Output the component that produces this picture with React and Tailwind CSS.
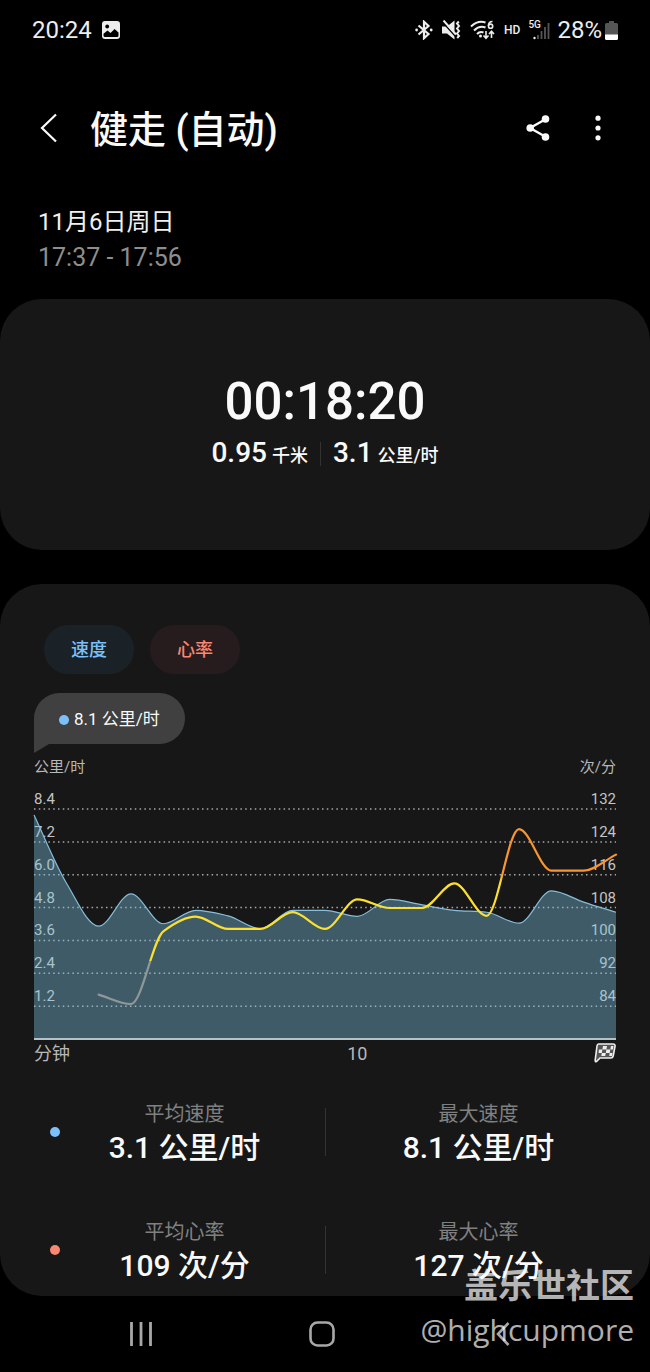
import React from 'react';

const speedData = [
  8.18, 5.7, 4.12, 5.3, 4.21, 4.7, 4.5, 4.03, 4.7, 4.7, 4.48, 5.1, 4.9, 4.7, 4.63, 4.23, 5.41, 5.0, 4.63,
];

// heart rate starts at the third sample
const heartData = [
  86.8, 84.5, 102.2, 105.8, 102.8, 102.8, 106.9, 102.8, 110, 107.9, 107.9, 113.9, 106, 127.1, 117, 117, 120.9,
];

const gridRows = [
  { speed: "8.4", heart: "132" },
  { speed: "7.2", heart: "124" },
  { speed: "6.0", heart: "116" },
  { speed: "4.8", heart: "108" },
  { speed: "3.6", heart: "100" },
  { speed: "2.4", heart: "92" },
  { speed: "1.2", heart: "84" },
];

const WIDTH = 582;
const BASE = 260;
const ROW = 32.85;
const STEP = WIDTH / (speedData.length - 1);

const speedPoints = speedData.map((v, i) => [i * STEP, BASE - (v / 1.2) * ROW]);
const heartPoints = heartData.map((v, i) => [(i + 2) * STEP, BASE - ((v - 76) / 8) * ROW]);

// Monotone cubic interpolation, so the line never overshoots a sample
const smoothPath = (points) => {
  const n = points.length;
  const slopes = [];
  for (let i = 0; i < n - 1; i++) {
    slopes.push((points[i + 1][1] - points[i][1]) / STEP);
  }
  const tangents = points.map((_, i) => {
    if (i === 0) return slopes[0];
    if (i === n - 1) return slopes[n - 2];
    const a = slopes[i - 1];
    const b = slopes[i];
    if (a * b <= 0) return 0;
    return (2 * a * b) / (a + b);
  });
  let d = `M${points[0][0]},${points[0][1]}`;
  for (let i = 0; i < n - 1; i++) {
    const [x0, y0] = points[i];
    const [x1, y1] = points[i + 1];
    const h = STEP / 3;
    d += `C${x0 + h},${y0 + tangents[i] * h} ${x1 - h},${y1 - tangents[i + 1] * h} ${x1},${y1}`;
  }
  return d;
};

const StatusBar = () => (
  <div className="h-15 flex items-center justify-between pl-8 pr-8 text-[#ededed]">
    <div className="flex items-center gap-[10px]">
      <span className="text-2xl">20:24</span>
      <svg width="18" height="18" viewBox="0 0 18 18">
        <rect width="18" height="18" rx="3" fill="#ededed" />
        <circle cx="5.2" cy="5.5" r="1.9" fill="#000" />
        <path d="M1.500 12.800L5.500 9.500l3 2.500L12.600 8 16.500 11.500v3q0 1.500-1.500 1.500H3q-1.500 0-1.500-1.500z" fill="#000" />
      </svg>
    </div>
    <div className="flex items-center">
      <svg className="mr-[9px]" width="18" height="20" viewBox="0 0 18 20" fill="none" stroke="#ededed" strokeWidth="2.200">
        <path d="M3.500 5.500L13.500 14 9 18.200V1.800L13.500 6 3.500 14.500" />
        <circle cx="1.600" cy="10" r="1.400" fill="#ededed" stroke="none" />
        <circle cx="16.200" cy="10" r="1.400" fill="#ededed" stroke="none" />
      </svg>
      <svg className="mr-[9px]" width="19" height="20" viewBox="0 0 19 20">
        <path d="M0 6.500h5L12.500 0.500v19l-7.500-6H0z" fill="#ededed" />
        <path d="M0 1.500L14 17" stroke="#000" strokeWidth="1.500" />
        <path d="M1.500 0.500L14 14.500" stroke="#ededed" strokeWidth="2" />
        <path d="M16.800 1.500l-1.800 2 2 2.500-2 2.500 2 2.500-2 2.500 2 2.500-1.800 2" stroke="#ededed" strokeWidth="2" fill="none" />
      </svg>
      <svg className="mr-[9px]" width="25" height="20" viewBox="0 0 25 20" fill="none" stroke="#ededed" strokeWidth="2">
        <path d="M1 6.500Q8 0 15.500 2.500M4 10.500Q9.500 5 15.500 7.500M7 14Q10 11 13.500 12.500" />
        <circle cx="10.500" cy="16" r="1.500" fill="#ededed" stroke="none" />
        <path d="M22.500 1.500Q18.500 1.500 18.400 6" strokeWidth="1.600" />
        <circle cx="20.600" cy="6.200" r="2.100" strokeWidth="1.600" />
        <path d="M16 11v7M13.500 15.500L16 18.200l2.500-2.700M21.500 18v-6.500M19 14l2.500-2.700L24 14" strokeWidth="1.600" />
      </svg>
      <span className="mr-2 text-xs font-medium">HD</span>
      <div className="relative mr-[7px] w-[22px] h-5">
        <span className="absolute left-0 top-0 text-[10px] leading-[10px] font-medium">5G</span>
        <svg width="22" height="20" viewBox="0 0 22 20">
          <circle cx="6.500" cy="18" r="1.200" fill="#ededed" />
          <path d="M10 19v-4M13.500 19v-8M17 19V7M20.500 19V3" stroke="#555" strokeWidth="1.800" />
        </svg>
      </div>
      <span className="mr-[3px] text-2xl">28%</span>
      <svg width="13" height="19" viewBox="0 0 13 19">
        <path d="M4 0h5v2h2.500q1.500 0 1.500 1.500V14H0V3.500Q0 2 1.500 2H4z" fill="#555" />
        <path d="M0 13.500h13V17.500q0 1.500-1.500 1.500h-10Q0 19 0 17.500z" fill="#fff" />
      </svg>
    </div>
  </div>
);

const Header = () => (
  <header className="flex items-center pt-[38px] pl-9 pr-[38px]">
    <button aria-label="返回" className="w-[54px] h-15 flex items-center">
      <svg width="24" height="30" viewBox="0 0 24 30" fill="none" stroke="#fafafa" strokeWidth="2.200">
        <path d="M20 1.500L6 15l14 13.500" />
      </svg>
    </button>
    <h1 className="flex-1 pt-1 text-[38px] leading-14 font-medium text-[#fafafa]">健走 (自动)</h1>
    <button aria-label="分享" className="w-10 h-15 flex items-center justify-center">
      <svg width="24" height="26" viewBox="0 0 24 26" fill="#fafafa">
        <path d="M20 4L4 13l16 9" fill="none" stroke="#fafafa" strokeWidth="2.400" />
        <circle cx="19.500" cy="4" r="3.800" />
        <circle cx="4.200" cy="13" r="3.800" />
        <circle cx="19.500" cy="22" r="3.800" />
      </svg>
    </button>
    <button aria-label="更多选项" className="ml-[26px] w-7 h-15 flex items-center justify-center">
      <svg width="6" height="26" viewBox="0 0 6 26" fill="#fafafa">
        <circle cx="3" cy="3.200" r="2.600" />
        <circle cx="3" cy="13" r="2.600" />
        <circle cx="3" cy="22.800" r="2.600" />
      </svg>
    </button>
  </header>
);

const SummaryCard = () => (
  <section className="mt-[23px] pt-[72px] pb-20 rounded-[42px] bg-[#171717] text-[#fafafa] font-medium text-center">
    <p className="text-[51px] leading-[62px]">00:18:20</p>
    <div className="mt-1 flex items-center justify-center leading-8">
      <p className="text-[28px]">
        0.95 <span className="-ml-[2px] text-lg">千米</span>
      </p>
      <span className="mx-3 w-px h-6 bg-[#333]" />
      <p className="text-[28px]">
        3.1 <span className="-ml-[2px] text-lg">公里/时</span>
      </p>
    </div>
  </section>
);

const Tooltip = () => (
  <div className="relative mt-[19px] w-fit h-[51px] flex items-center gap-[5px] pt-[2px] px-[25px] rounded-[26px] rounded-bl-none bg-[#404040] text-[17px] text-[#fafafa]">
    <span className="w-[10px] h-[10px] rounded-full bg-[#7cc0fb]" />
    8.1 公里/时
    <svg className="absolute left-0 top-full" width="16" height="9" viewBox="0 0 16 9">
      <path d="M0 0H15L0 9z" fill="#404040" />
    </svg>
  </div>
);

const Chart = () => {
  const speedLine = smoothPath(speedPoints);
  return (
    <div className="mt-[11px]">
      <div className="flex justify-between text-[15px] leading-6 text-[#b8b8b8]">
        <span>公里/时</span>
        <span>次/分</span>
      </div>
      <svg className="w-full h-auto block overflow-visible" viewBox="0 0 582 286">
        <defs>
          <linearGradient id="zones" gradientUnits="userSpaceOnUse" x1="0" y1="0" x2="0" y2="260">
            <stop offset="0.36" stopColor="#f7962f" />
            <stop offset="0.4" stopColor="#fbe030" />
            <stop offset="0.7" stopColor="#fbe030" />
            <stop offset="0.7" stopColor="#8f9799" />
          </linearGradient>
        </defs>
        {gridRows.map((row, i) => {
          const y = BASE - ROW * (7 - i);
          return (
            <g key={row.speed} fill="#c4c4c4" fontSize="15">
              <line x1="0" x2={WIDTH} y1={y} y2={y} stroke="#a8a8a8" strokeWidth="1.500" strokeDasharray="1.500 3.300" />
              <text x="0" y={y - 5}>{row.speed}</text>
              <text x={WIDTH} y={y - 5} textAnchor="end">{row.heart}</text>
            </g>
          );
        })}
        <path d={`${speedLine}V${BASE}H0Z`} fill="#7bc3e1" fillOpacity="0.4" />
        <path d={speedLine} fill="none" stroke="#86bedb" strokeWidth="1.200" />
        <line x1="0" x2={WIDTH} y1={BASE} y2={BASE} stroke="#b4c2c8" strokeWidth="2" />
        <path d={smoothPath(heartPoints)} fill="none" stroke="url(#zones)" strokeWidth="2.200" strokeLinecap="round" />
        <g fill="#b8b8b8" fontSize="18">
          <text x="0" y="281">分钟</text>
          <text x={STEP * 10} y="281" textAnchor="middle">10</text>
        </g>
        <g transform="translate(560 264)">
          <path d="M4.500 1H19q2.500 0 2 2.500L19.200 13q-.4 2-2.400 2H6l-3.500 3.500Q1 19 1.200 17L3 3Q3.200 1 4.500 1z" fill="#555" stroke="#eee" strokeWidth="1.600" />
          <path d="M9 3h4l-.6 3.500h-4zM17 3h2.500l-.6 3.500h-2.600zM5 6.500h3.400L7.800 10H4.500zM12.400 6.500h3.900l-.6 3.500h-3.900zM7.800 10h4l-.6 3H7.300zM15.700 10h2.800l-.6 3h-2.700z" fill="#eee" />
        </g>
      </svg>
    </div>
  );
};

const Stat = ({ label, value }) => (
  <div className="flex-1 text-center">
    <p className="text-[20px] leading-8 text-[#808080]">{label}</p>
    <p className="text-[30px] leading-9 font-medium text-[#fafafa]">{value}</p>
  </div>
);

const StatRow = ({ dotClass, average, max }) => (
  <div className="flex items-center pl-4 pr-[13px]">
    <span className={`w-[10px] h-[10px] rounded-full ${dotClass}`} />
    <Stat label={average.label} value={average.value} />
    <span className="ml-4 mr-7 w-px h-12 bg-[#333]" />
    <Stat label={max.label} value={max.value} />
  </div>
);

const NavBar = () => (
  <nav className="h-[76px] flex pl-[50px] pr-14">
    <button aria-label="最近" className="flex-1 flex items-center justify-center">
      <svg width="24" height="26" viewBox="0 0 24 26" stroke="#a8a8a8" strokeWidth="2.800">
        <path d="M2.500 1v24M12 1v24M21.500 1v24" />
      </svg>
    </button>
    <button aria-label="主页" className="flex-1 flex items-center justify-center">
      <svg width="26" height="26" viewBox="0 0 26 26" fill="none" stroke="#a8a8a8" strokeWidth="2.600">
        <rect x="1.500" y="1.500" width="23" height="23" rx="7" />
      </svg>
    </button>
    <button aria-label="后退" className="flex-1 flex items-center justify-center">
      <svg width="14" height="24" viewBox="0 0 14 24" fill="none" stroke="#a8a8a8" strokeWidth="2.600">
        <path d="M12.500 1L2 12l10.500 11" />
      </svg>
    </button>
  </nav>
);

const App = () => {
  return (
    <div className="relative w-full min-h-screen bg-black font-[Roboto,'Noto_Sans_CJK_SC',sans-serif]">
      <StatusBar />
      <Header />
      <div className="pt-[46px] px-[38px]">
        <p className="text-2xl leading-9 text-[#f0f0f0]">11月6日周日</p>
        <p className="text-[25px] leading-9 text-[#8e8e8e]">17:37 - 17:56</p>
      </div>
      <SummaryCard />

      <section className="mt-[34px] pt-[41px] pb-3 px-[34px] rounded-[42px] bg-[#171717]">
        <div className="flex gap-4 pl-[10px]">
          <button className="w-[90px] h-[49px] rounded-full bg-[#1b2227] text-lg font-medium text-[#7cc0fb]">速度</button>
          <button className="w-[90px] h-[49px] rounded-full bg-[#271c1d] text-lg font-medium text-[#f98772]">心率</button>
        </div>
        <Tooltip />
        <Chart />
        <div className="mt-[33px] flex flex-col gap-[50px]">
          <StatRow
            dotClass="bg-[#7cc0fb]"
            average={{ label: "平均速度", value: "3.1 公里/时" }}
            max={{ label: "最大速度", value: "8.1 公里/时" }}
          />
          <StatRow
            dotClass="bg-[#f98772]"
            average={{ label: "平均心率", value: "109 次/分" }}
            max={{ label: "最大心率", value: "127 次/分" }}
          />
        </div>
      </section>
      <NavBar />

      {/* Watermark */}
      <div className="absolute right-4 bottom-5 text-right text-white/70 pointer-events-none">
        <p className="text-[34px] leading-[44px] font-bold">盖乐世社区</p>
        <p className="text-[30px] leading-[44px] font-['Open_Sans','Noto_Sans',sans-serif]">@highcupmore</p>
      </div>
    </div>
  );
};

export default App;
